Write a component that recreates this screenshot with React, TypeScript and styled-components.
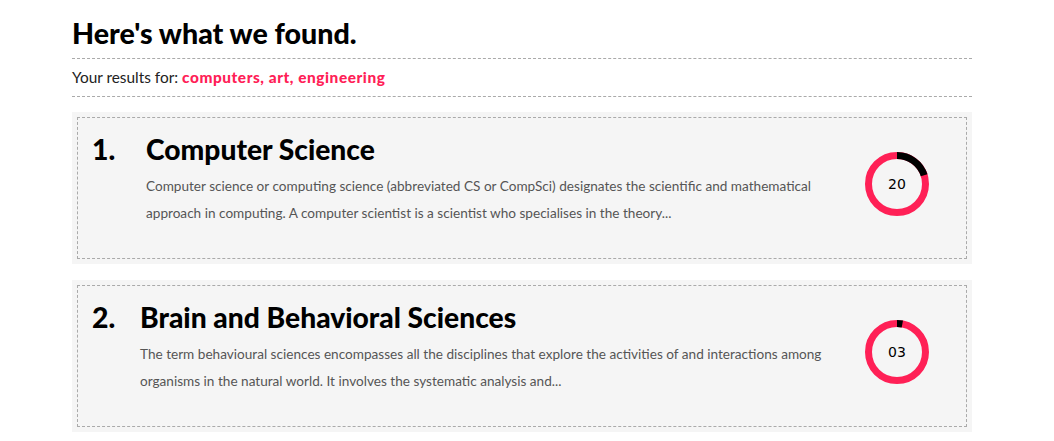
import React from "react";
import styled, { createGlobalStyle } from "styled-components";

const Global = createGlobalStyle`
  html, body { margin: 0; padding: 0; background: #fff; }
  body { font-family: Lato, "Open Sans", sans-serif; color: #222; }
`;

const Page = styled.div`
  width: 900px;
  margin-left: 72px;
  padding-top: 15px;
`;

const Heading = styled.h1`
  margin: 0;
  font-size: 28.6px;
  font-weight: 900;
  color: #000;
  line-height: 36px;
  padding-bottom: 7px;
  border-bottom: 1px dashed #aaa;
`;

const Query = styled.p`
  margin: 0;
  font-size: 15.4px;
  line-height: 37px;
  color: #222;
  border-bottom: 1px dashed #aaa;
`;

const Terms = styled.strong`
  color: #ff2056;
  font-weight: 900;
  letter-spacing: 0.55px;
`;

const List = styled.div`
  display: flex;
  flex-direction: column;
  gap: 16px;
  padding-top: 15px;
`;

const Card = styled.article`
  background: #f5f5f5;
  padding: 5px;
`;

const CardInner = styled.div`
  border: 1px dashed #aaa;
  display: flex;
  align-items: flex-start;
  padding: 13px 36px 0 14px;
  height: 142px;
  box-sizing: border-box;
`;

const Num = styled.div<{ $w: number }>`
  width: ${(p) => p.$w}px;
  flex: none;
  font-size: 28.4px;
  font-weight: 900;
  color: #000;
  line-height: 36px;
`;

const Body = styled.div`
  flex: 1;
  min-width: 0;
  padding-right: 20px;
`;

const Title = styled.h2`
  margin: 0;
  font-size: 28.2px;
  font-weight: 900;
  color: #000;
  line-height: 36px;
`;

const Desc = styled.p`
  margin: 6px 0 0;
  font-size: 13.6px;
  line-height: 27px;
  color: #555;
`;

const RingWrap = styled.div`
  flex: none;
  width: 66px;
  height: 66px;
  margin-top: 20px;
  position: relative;
  display: flex;
  align-items: center;
  justify-content: center;
`;

const RingSvg = styled.svg`
  position: absolute;
  inset: 0;
`;

const RingLabel = styled.span`
  position: relative;
  font-family: "DejaVu Sans", Verdana, sans-serif;
  font-size: 14px;
  color: #000;
`;

function Ring({ value }: { value: number }) {
  const r = 28.5;
  const c = 2 * Math.PI * r;
  const frac = value / 100;
  return (
    <RingWrap>
      <RingSvg width="66" height="66" viewBox="0 0 66 66">
        <circle cx="33" cy="33" r={r} fill="none" stroke="#ff2056" strokeWidth="7" />
        <circle
          cx="33"
          cy="33"
          r={r}
          fill="none"
          stroke="#000"
          strokeWidth="7"
          strokeDasharray={`${c * frac} ${c}`}
          transform="rotate(-90 33 33)"
        />
      </RingSvg>
      <RingLabel>{String(value).padStart(2, "0")}</RingLabel>
    </RingWrap>
  );
}

const results = [
  {
    n: "1.",
    w: 54,
    title: "Computer Science",
    desc: "Computer science or computing science (abbreviated CS or CompSci) designates the scientific and mathematical approach in computing. A computer scientist is a scientist who specialises in the theory...",
    score: 20,
  },
  {
    n: "2.",
    w: 48,
    title: "Brain and Behavioral Sciences",
    desc: "The term behavioural sciences encompasses all the disciplines that explore the activities of and interactions among organisms in the natural world. It involves the systematic analysis and...",
    score: 3,
  },
];

export default function App() {
  return (
    <>
      <Global />
      <Page>
        <Heading>Here's what we found.</Heading>
        <Query>
          Your results for: <Terms>computers, art, engineering</Terms>
        </Query>
        <List>
          {results.map((r) => (
            <Card key={r.n}>
              <CardInner>
                <Num $w={r.w}>{r.n}</Num>
                <Body>
                  <Title>{r.title}</Title>
                  <Desc>{r.desc}</Desc>
                </Body>
                <Ring value={r.score} />
              </CardInner>
            </Card>
          ))}
        </List>
      </Page>
    </>
  );
}
